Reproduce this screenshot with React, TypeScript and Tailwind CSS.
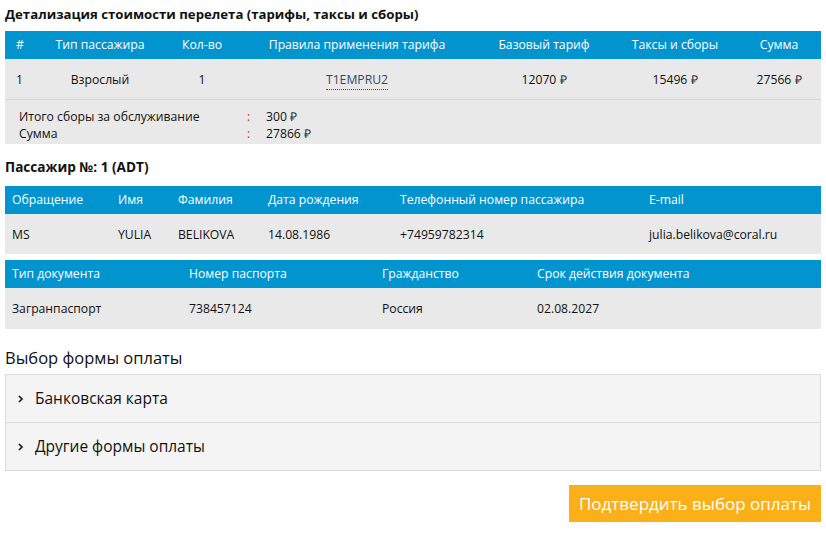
import React from "react";

const font = { fontFamily: '"Open Sans", "Liberation Sans", sans-serif' };

function Rub() {
  return <span className="text-[#3a3a3a]">₽</span>;
}

function Chevron() {
  return (
    <svg width="8" height="10" viewBox="0 0 8 10" className="mr-[10px]">
      <path d="M2 2 L5 5 L2 8" fill="none" stroke="#1a1a1a" strokeWidth="1.7" />
    </svg>
  );
}

export default function App() {
  const th = "text-white";
  return (
    <div className="w-[826px] h-[533px] bg-white text-[#111] text-[12.2px] px-[5px]" style={font}>
      <div className="pt-[5px] h-[31px] font-bold text-[13.2px] leading-[18px]">
        Детализация стоимости перелета (тарифы, таксы и сборы)
      </div>
      <div className="w-[816px]">
        <div className="grid grid-cols-[30px_130px_74px_236px_138px_124px_84px] h-[28px] items-center bg-[#0294cf] text-center">
          <div className={th}>#</div>
          <div className={th}>Тип пассажира</div>
          <div className={th}>Кол-во</div>
          <div className={th}>Правила применения тарифа</div>
          <div className={th}>Базовый тариф</div>
          <div className={th}>Таксы и сборы</div>
          <div className={th}>Сумма</div>
        </div>
        <div className="grid grid-cols-[30px_130px_74px_236px_138px_124px_84px] h-[41px] pt-[3px] items-center bg-[#e9e9e9] text-center border-b border-[#d6d6d6]">
          <div className="text-left pl-[11px]">1</div>
          <div>Взрослый</div>
          <div>1</div>
          <div>
            <span className="text-[#2d4a6b] border-b border-dotted border-[#1a5fa8] pb-[1px]">T1EMPRU2</span>
          </div>
          <div>12070 <Rub /></div>
          <div>15496 <Rub /></div>
          <div>27566 <Rub /></div>
        </div>
        <div className="bg-[#e9e9e9] h-[44px] pt-[8px] pl-[14px] leading-[17px]">
          <div className="flex">
            <div className="w-[228px]">Итого сборы за обслуживание</div>
            <div className="w-[19px] text-[#c33]">:</div>
            <div>300 <Rub /></div>
          </div>
          <div className="flex">
            <div className="w-[228px]">Сумма</div>
            <div className="w-[19px] text-[#c33]">:</div>
            <div>27866 <Rub /></div>
          </div>
        </div>
      </div>

      <div className="pt-[14px] h-[42px] font-bold text-[13.6px] leading-[18px]">Пассажир №: 1 (ADT)</div>

      <div className="w-[816px]">
        <div className="grid grid-cols-[106px_60px_90px_132px_249px_179px] h-[28px] pt-[1px] items-center bg-[#0294cf] pl-[7px]">
          <div className={th}>Обращение</div>
          <div className={th}>Имя</div>
          <div className={th}>Фамилия</div>
          <div className={th}>Дата рождения</div>
          <div className={th}>Телефонный номер пассажира</div>
          <div className={th}>E-mail</div>
        </div>
        <div className="grid grid-cols-[106px_60px_90px_132px_249px_179px] h-[40px] pt-[2px] items-center bg-[#e9e9e9] pl-[7px]">
          <div>MS</div>
          <div>YULIA</div>
          <div>BELIKOVA</div>
          <div>14.08.1986</div>
          <div>+74959782314</div>
          <div>julia.belikova@coral.ru</div>
        </div>
        <div className="h-[6px]" />
        <div className="grid grid-cols-[177px_193px_155px_284px] h-[28px] pt-[1px] items-center bg-[#0294cf] pl-[7px]">
          <div className={th}>Тип документа</div>
          <div className={th}>Номер паспорта</div>
          <div className={th}>Гражданство</div>
          <div className={th}>Срок действия документа</div>
        </div>
        <div className="grid grid-cols-[177px_193px_155px_284px] h-[41px] pt-[1px] items-center bg-[#e9e9e9] pl-[7px]">
          <div>Загранпаспорт</div>
          <div>738457124</div>
          <div>Россия</div>
          <div>02.08.2027</div>
        </div>
      </div>

      <div className="pt-[17px] h-[45px] text-[16.5px] leading-[23px]">Выбор формы оплаты</div>

      <div className="w-[816px] border border-[#dcdcdc] bg-[#f4f4f4] text-[15.5px]">
        <div className="h-[48px] flex items-center pl-[11px] border-b border-[#dcdcdc]">
          <Chevron />
          <span>Банковская карта</span>
        </div>
        <div className="h-[47px] flex items-center pl-[11px]">
          <Chevron />
          <span>Другие формы оплаты</span>
        </div>
      </div>

      <div className="flex justify-end w-[816px] pt-[14px]">
        <button className="w-[252px] h-[37px] bg-[#fbb01a] text-white text-[17px]">
          Подтвердить выбор оплаты
        </button>
      </div>
    </div>
  );
}
